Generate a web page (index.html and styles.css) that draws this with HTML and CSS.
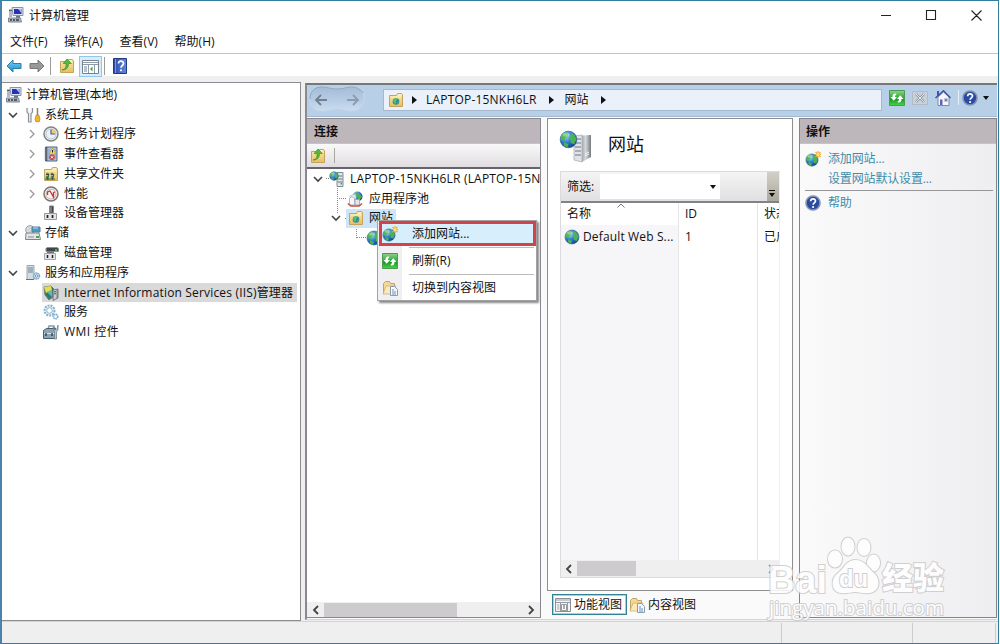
FILE: index.html
```html
<!DOCTYPE html>
<html lang="zh-CN">
<head>
<meta charset="utf-8">
<title>计算机管理</title>
<link rel="stylesheet" href="styles.css">
</head>
<body>
<svg class="defs" width="0" height="0">
  <defs>
    <radialGradient id="gGlobe" cx=".35" cy=".3" r=".75"><stop offset="0" stop-color="#a9dcf7"/><stop offset=".5" stop-color="#2f7fcb"/><stop offset="1" stop-color="#123f8c"/></radialGradient>
    <linearGradient id="gFolder" x2="0" y2="1"><stop offset="0" stop-color="#fbeaae"/><stop offset="1" stop-color="#e5bf61"/></linearGradient>
    <linearGradient id="gServer" x2="1"><stop offset="0" stop-color="#a2a8ac"/><stop offset=".4" stop-color="#d6dade"/><stop offset="1" stop-color="#74797e"/></linearGradient>
    <linearGradient id="gGreen" x2="0" y2="1"><stop offset="0" stop-color="#8fd486"/><stop offset=".6" stop-color="#1d9b2b"/><stop offset="1" stop-color="#49d644"/></linearGradient>
    <linearGradient id="gBlue" x2="0" y2="1"><stop offset="0" stop-color="#7fd0f4"/><stop offset="1" stop-color="#178dcf"/></linearGradient>
    <linearGradient id="gHelp" x2="1"><stop offset="0" stop-color="#2a49a5"/><stop offset="1" stop-color="#6489dc"/></linearGradient>
    <linearGradient id="gNav" x2="0" y2="1"><stop offset="0" stop-color="#a5bcd6"/><stop offset=".5" stop-color="#b5cbe4"/><stop offset="1" stop-color="#cbdcef"/></linearGradient>
  </defs>
  <symbol id="computer" viewBox="0 0 16 16"><path d="M4 .5h11v8H5z" fill="#dce2ef" stroke="#8c93a5"/><path d="M6 2h7.5v5H6z" fill="#2532b8"/><path d="M10 2h3.5v4z" fill="#9cb8f5"/><path d="M1 2h3v8H1z" fill="#aeb7c6"/><path d="M1 3.5h3" stroke="#566" /><path d="M8 9h4v2H8z" fill="#707784"/><path d="M.5 11h12l1 4H.5z" fill="#b3bac6" stroke="#7c8493"/><path d="M2 13h2m1 0h2m1 0h3" stroke="#343c4d" stroke-width="1.5"/></symbol>
  <symbol id="tools" viewBox="0 0 16 16"><path d="M2 1v4l1.500 2v8h2.500V7L7.500 5V1" fill="#eef0f1" stroke="#8d9299" stroke-width="1.200"/><path d="M4.700 0v4" stroke="#fff" stroke-width="2"/><path d="M12.500 1v8" stroke="#8a8174" stroke-width="1.500"/><path d="M11.200 8h2.600l1.200 4-.8 2.700h-3.400L10 12z" fill="#efb72c" stroke="#b77e19" stroke-width=".7"/></symbol>
  <symbol id="clock" viewBox="0 0 16 16"><circle cx="8" cy="8" r="7" fill="#edf1f6" stroke="#838485" stroke-width="1.500"/><path d="M8 2.500A5.500 5.500 0 0 1 13.500 8H8z" fill="#f7cd6b"/><circle cx="8" cy="8" r="5" fill="none" stroke="#bbc8d8"/><path d="M8 3.500V8h4" fill="none" stroke="#436291" stroke-width="1.200"/></symbol>
  <symbol id="event" viewBox="0 0 16 16"><path d="M2.500 1h11.500v14H2.500z" fill="#a9c3e4" stroke="#566779"/><path d="M5 4h8M5 6h8M5 8h8M5 10h8M5 12h8" stroke="#7b98c1" stroke-width=".7"/><path d="M3.500 1v14" stroke="#435468" stroke-width="1.500"/><path d="M1.500 3h3m-3 2h3m-3 2h3m-3 2h3m-3 2h3m-3 2h3" stroke="#858b90" stroke-width=".8"/><path d="M9.500 2l3.600 6H6z" fill="#fadf52" stroke="#c19925" stroke-width=".6"/><path d="M9.500 4v2.500" stroke="#222"/><circle cx="9" cy="11.300" r="2.800" fill="#db3d43"/><path d="M7.900 10.200l2.200 2.200m0-2.200l-2.200 2.200" stroke="#fff"/></symbol>
  <symbol id="folder" viewBox="0 0 16 16"><path d="M1.500 3.500h7l1-2h4l1 1.500v11.500h-13z" fill="url(#gFolder)" stroke="#c7a35a"/><path d="M10 3h3" stroke="#fffbe1"/><path d="M2.500 5h10.800" stroke="#fff0b6"/></symbol>
  <symbol id="share" viewBox="0 0 16 16"><use href="#folder"/><g fill="#4b946e"><circle cx="4.500" cy="8" r="1.500"/><circle cx="9" cy="8" r="1.500"/><path d="M2 14l1-4h3l-.5 4zM7 14l1-4h3l-1 4z"/></g><path d="M3 8.500h3l-2 4.500h3m1-4.500h3L9 13h3" fill="none" stroke="#263f39" stroke-width=".8"/></symbol>
  <symbol id="perf" viewBox="0 0 16 16"><circle cx="8" cy="8" r="7" fill="#f5f4f4" stroke="#7b7472" stroke-width="1.500"/><circle cx="8" cy="8" r="5" fill="none" stroke="#c4b1af"/><path d="M4.500 9V6L7 5l3.500 6V6.500L12 6" fill="none" stroke="#c73434" stroke-width="1.300"/></symbol>
  <symbol id="device" viewBox="0 0 16 16"><path d="M6.500 1h4v7h-4z" fill="#3c4043" stroke="#85898b"/><path d="M8 2v5" stroke="#b4b8ba"/><path d="M1.500 8.500h12v6h-12z" fill="#e5e5e8" stroke="#9999a0"/><path d="M4.500 10v3m5-3v3" stroke="#222" stroke-width="1.700"/></symbol>
  <symbol id="storage" viewBox="0 0 16 16"><circle cx="5" cy="5" r="4.300" fill="#dce0df" stroke="#999"/><circle cx="5" cy="5" r="1.300" fill="#fff" stroke="#aaa" stroke-width=".6"/><path d="M7 2h8v5H7z" fill="#409fd1" stroke="#667a86"/><path d="M8 3h5" stroke="#afe6fb"/><path d="M1 8h13l1.500 6.500H.5z" fill="#e2e4e5" stroke="#7e8589"/><path d="M3 12h6" stroke="#889"/><path d="M11 11h3v2h-3z" fill="#46a843"/></symbol>
  <symbol id="disk" viewBox="0 0 16 16"><path d="M3 3.500l1-1h10l1.500 1v3H3z" fill="#3f4549" stroke="#8f9397"/><path d="M12 5h2" stroke="#46db49" stroke-width="1.500"/><path d="M4 6.500h7v3H4z" fill="#70757a"/><path d="M1.500 8.500h11v6h-11z" fill="#e7e7ea" stroke="#a3a3a9"/><path d="M4.500 10v3m5-3v3" stroke="#222" stroke-width="1.500"/></symbol>
  <symbol id="services" viewBox="0 0 16 16"><path d="M2 .5h7v14H2z" fill="#d2dce5" stroke="#9aa6b0"/><path d="M3 3h5M3 5h5M3 7h5" stroke="#708291"/><path d="M1 14.500h8" stroke="#67737c"/><circle cx="11.500" cy="11" r="3" fill="#d2e6f5" stroke="#7aa5c4" stroke-width="1.500" stroke-dasharray="1.500 .6"/><circle cx="11.500" cy="11" r="1.200" fill="#fff" stroke="#7496af"/></symbol>
  <symbol id="gears" viewBox="0 0 16 16"><circle cx="6.500" cy="6.500" r="5" fill="#e5f2f9" stroke="#86b2cf" stroke-width="2" stroke-dasharray="2 1"/><circle cx="6.500" cy="6.500" r="2.800" fill="#fff" stroke="#8bb1cb"/><circle cx="12.500" cy="12.500" r="2.300" fill="#e8f5fc" stroke="#78a6c7" stroke-width="1.400" stroke-dasharray="1.400 .6"/></symbol>
  <symbol id="wmi" viewBox="0 0 16 16"><path d="M5 5l1-3h5l1 3" fill="none" stroke="#8a98a3" stroke-width="1.500"/><path d="M.5 6.500l3-2h9v10H.5z" fill="#8fa3b3" stroke="#455e70"/><path d="M1 9.500h11" stroke="#dce6ed"/><path d="M3 9v3m6-3v3" stroke="#273b49" stroke-width="1.300"/><path d="M10 3l2 3 2-1 1-4v5l-1.500 2v7h-2V8z" fill="#b9c8d5" stroke="#62798a" stroke-width=".7"/></symbol>
  <symbol id="globe" viewBox="0 0 16 16"><circle cx="8" cy="8" r="7" fill="url(#gGlobe)" stroke="#36658b" stroke-width=".6"/><path d="M2 4l3-2 3 1-1 3-2 1v2L3 8 1.400 9zM10 2c3 1 4.500 4 4.600 6l-1.800 4-3-1V8L8 7l2-2zM4 10l4 2-1 3-3-2z" fill="#4eb94e" opacity=".92"/><ellipse cx="6" cy="4" rx="3" ry="1.600" fill="#fff" opacity=".35"/></symbol>
  <symbol id="addglobe" viewBox="0 0 16 16"><svg x="0" y="2" width="14" height="14"><use href="#globe" width="14" height="14"/></svg><path d="M13 0v7M9.500 3.500h7M10.500 1l5 5m0-5l-5 5" stroke="#eda72e" stroke-width="1.100"/><circle cx="13" cy="3.500" r="1.600" fill="#ffe47a"/></symbol>
  <symbol id="iis" viewBox="0 0 16 16"><path d="M1 2l7-1 3 3-1 8-4 3-4-5z" fill="#337b69" stroke="#6a8582"/><path d="M1 2l7-1 1 4-6 3z" fill="#e7db53"/><path d="M4 7l5-2v7z" fill="#59b9c3"/><path d="M10 5l5-1v9l-5 2.500z" fill="url(#gServer)" stroke="#747d82"/><path d="M11 7l2-.5m-2 2.500l2-.5" stroke="#555"/></symbol>
  <symbol id="serverglobe" viewBox="0 0 16 16"><path d="M8 1.500h6v14H8z" fill="#e1e6ea" stroke="#7c8e94"/><path d="M8.500 5h5m-5 3h5m-5 3h5" stroke="#628071"/><path d="M11.500 12h1.500v1.500h-1.500z" fill="#3bb041"/><svg x="0" y="0" width="10" height="10"><use href="#globe" width="10" height="10"/></svg></symbol>
  <symbol id="pool" viewBox="0 0 16 16"><circle cx="10.500" cy="5.500" r="5" fill="url(#gGlobe)"/><path d="M8 1.500l4 .5 3 4-3 3-2-3z" fill="#4eaf50"/><path d="M3 5l4-2 2 2v3H3z" fill="#e3e9ef" stroke="#a3abb5" stroke-width=".6"/><path d="M2.500 7.500l2.500-2 2.500 2v6.500h-5z" fill="#f6f7f8" stroke="#a5abb3" stroke-width=".8"/><path d="M8 8.500h4.500V14H8z" fill="#e3e7ea" stroke="#a0a7b0" stroke-width=".8"/><path d="M.8 12.500l3.200 2.500h8l3-2.500" fill="none" stroke="#c74b45" stroke-width="1.500"/></symbol>
  <symbol id="sites" viewBox="0 0 16 16"><use href="#folder"/><circle cx="8" cy="9.500" r="3.300" fill="#2e83aa"/><path d="M5 8l3-2 2 1-2 2v3l-2-1zM10 9l1 1-2 2z" fill="#58c55b"/></symbol>
  <symbol id="up" viewBox="0 0 16 16"><use href="#folder"/><path d="M3 12c4-1 4-3 4-6.500H4L8 1l4.500 4.500H9.500c0 4-2 6.500-6.500 6.500z" fill="#53bb36" stroke="#338525" stroke-width=".6"/></symbol>
  <symbol id="refresh" viewBox="0 0 16 16"><path d="M.5 .5h15v15H.5z" fill="url(#gGreen)" stroke="#4d9b50"/><path d="M7.200 3.500C4 3 3.500 5 3.500 7H1.500l3.200 3.700L8 7H6c0-1.300.2-2 1.200-2zM8.800 12.500c3.200.5 3.700-1.500 3.700-3.500h2L11.300 5.300 8 9h2c0 1.300-.2 2-1.200 2z" fill="#fff"/></symbol>
  <symbol id="content" viewBox="0 0 16 16"><path d="M1.500 3.500l2-2h4l1 2h4v10h-11z" fill="#f2d999" stroke="#c2a366"/><path d="M4 6h10l-3 8H1z" fill="#fae9b9" stroke="#c9ab69" stroke-width=".7"/><path d="M8.500 6.500h4l3 3v6h-7z" fill="#f4f8fc" stroke="#8b9cae"/><path d="M10 10h2m-2 2h4m-4 2h4" stroke="#4879af" stroke-width=".8"/></symbol>
  <symbol id="feature" viewBox="0 0 16 16"><path d="M.5 1.500h15v13H.5z" fill="#f5f5f7" stroke="#8b9096"/><path d="M1 3h14M1 5.500h14M5.500 5v9M12.500 5v9" stroke="#959ba4"/><path d="M2 7h2.500v6H2z" fill="#cbd0d7"/><path d="M6.500 7.500h5v6h-5z" fill="#fff" stroke="#999"/><path d="M8 9h2m-2 2h2" stroke="#4e5b73"/></symbol>
  <symbol id="help" viewBox="0 0 16 16"><circle cx="8" cy="8" r="7" fill="#2b4ba2" stroke="#8392b1" stroke-width="1.600"/><path d="M5.700 6.200c0-3 4.800-2.900 4.800-.2 0 2-2.400 1.800-2.400 3.800" fill="none" stroke="#fff" stroke-width="1.700"/><circle cx="8.100" cy="12" r="1.100" fill="#fff"/></symbol>
  <symbol id="down" viewBox="0 0 10 10"><path d="M1 3l4 4 4-4" fill="none" stroke="#444" stroke-width="1.600"/></symbol>
  <symbol id="right" viewBox="0 0 10 10"><path d="M3 1l4 4-4 4" fill="none" stroke="#999" stroke-width="1.300"/></symbol>
</svg>

<main class="window">
  <header class="titlebar"><svg class="ic"><use href="#computer"/></svg><span class="title">计算机管理</span>
    <svg class="controls" viewBox="0 0 104 14"><path d="M1 7.500h10M46.500 2.500h9v9h-9zM91.500 2.500l10 10m0-10l-10 10" fill="none" stroke="#222" stroke-width="1.100"/></svg>
  </header>
  <nav class="menubar"><span>文件(F)</span><span>操作(A)</span><span>查看(V)</span><span>帮助(H)</span></nav>
  <div class="toolbar">
    <svg class="arrow" viewBox="0 0 16 14"><path d="M1 7l6-6v3.500h8v5H7V13z" fill="url(#gBlue)" stroke="#2f7da9"/></svg>
    <svg class="arrow fwd" viewBox="0 0 16 14"><path d="M15 7L9 1v3.500H1v5h8V13z" fill="#999" stroke="#777"/></svg>
    <i class="sep"></i><svg class="ic up"><use href="#up"/></svg>
    <span class="pressed"><svg viewBox="0 0 17 14"><path d="M.5.500h16v13H.5z" fill="#fff" stroke="#77828f"/><path d="M1 2.500h15M1 4.500h15M6.500 5v8M12.500 5v8" stroke="#8f9ba8"/><path d="M2 7h3M2 9h3M2 11h3" stroke="#6f87a8"/><path d="M10.500 6.500v5L8 9z" fill="#38a634"/></svg></span>
    <i class="sep"></i>
    <svg class="book" viewBox="0 0 14 16"><path d="M.5.500h13v15H.5z" fill="url(#gHelp)" stroke="#213a80"/><path d="M2.500 1v14" stroke="#7d96de"/><path d="M5.500 5.500c0-3.500 5-3 5 0 0 2-2.500 2-2.500 4.300" fill="none" stroke="#fff" stroke-width="1.700"/><circle cx="8" cy="12.300" r="1.100" fill="#fff"/></svg>
  </div>

  <div class="body">
    <aside class="tree">
      <div class="row l0"><svg class="ic"><use href="#computer"/></svg><span>计算机管理(本地)</span></div>
      <div class="row l1"><svg class="tw"><use href="#down"/></svg><svg class="ic"><use href="#tools"/></svg><span>系统工具</span></div>
      <div class="row l2"><svg class="tw"><use href="#right"/></svg><svg class="ic"><use href="#clock"/></svg><span>任务计划程序</span></div>
      <div class="row l2"><svg class="tw"><use href="#right"/></svg><svg class="ic"><use href="#event"/></svg><span>事件查看器</span></div>
      <div class="row l2"><svg class="tw"><use href="#right"/></svg><svg class="ic"><use href="#share"/></svg><span>共享文件夹</span></div>
      <div class="row l2"><svg class="tw"><use href="#right"/></svg><svg class="ic"><use href="#perf"/></svg><span>性能</span></div>
      <div class="row l2"><i class="tw"></i><svg class="ic"><use href="#device"/></svg><span>设备管理器</span></div>
      <div class="row l1"><svg class="tw"><use href="#down"/></svg><svg class="ic"><use href="#storage"/></svg><span>存储</span></div>
      <div class="row l2"><i class="tw"></i><svg class="ic"><use href="#disk"/></svg><span>磁盘管理</span></div>
      <div class="row l1"><svg class="tw"><use href="#down"/></svg><svg class="ic"><use href="#services"/></svg><span>服务和应用程序</span></div>
      <div class="row l2"><i class="tw"></i><div class="selected"><svg class="ic"><use href="#iis"/></svg><span class="iis">Internet Information Services (IIS)管理器</span></div></div>
      <div class="row l2"><i class="tw"></i><svg class="ic"><use href="#gears"/></svg><span>服务</span></div>
      <div class="row l2"><i class="tw"></i><svg class="ic"><use href="#wmi"/></svg><span class="wmi">WMI 控件</span></div>
    </aside>

    <section class="console">
      <div class="addressbar">
        <svg class="navbtns" viewBox="0 0 56 27"><path d="M13 1C5 1 1 6 1 13s4 12 12 12c6 0 8-2 15-2s9 2 15 2c7 0 12-5 12-12S50 1 43 1c-6 0-8 2-15 2S19 1 13 1z" fill="url(#gNav)" stroke="#c5d7eb"/><path d="M1 13C1 6 5 1 13 1c6 0 8 2 15 2s9-2 15-2c5 0 9 3 11 6" fill="none" stroke="#8ba2bb"/><path d="M18 14H7m5-5l-5 5 5 5" fill="none" stroke="#71808f" stroke-width="1.800"/><path d="M38 14h11m-5-5l5 5-5 5" fill="none" stroke="#8b9cae" stroke-width="1.800"/></svg>
        <div class="address"><svg class="ic"><use href="#sites"/></svg><i class="tri"></i><span class="host">LAPTOP-15NKH6LR</span><i class="tri"></i><span>网站</span><i class="tri"></i></div>
        <div class="addrtools">
          <svg class="ic"><use href="#refresh"/></svg>
          <svg class="ic" viewBox="0 0 16 16"><path d="M.5 1.500h15v13H.5z" fill="#c8d0da" stroke="#b1bbc8"/><path d="M4 4l8 8m0-8l-8 8" stroke="#8c96a2" stroke-width="2.400"/><path d="M4 4l8 8m0-8l-8 8" stroke="#e7ebef" stroke-width="1"/></svg>
          <svg class="ic" viewBox="0 0 16 16"><path d="M2 1h2v5H2z" fill="#4456ac"/><path d="M3 7v8.500h11V7L8.500 2z" fill="#f5f5fa" stroke="#8388a0"/><path d="M.5 8L8.500.800 15.500 8" fill="none" stroke="#3e51ad" stroke-width="1.500"/><path d="M5 9.500h2.500V15H5z" fill="#5668b6"/><path d="M9.500 8.500h3v3h-3z" fill="#7284c0"/></svg>
          <i class="lightsep"></i><svg class="ic"><use href="#help"/></svg><i class="dropdown"></i>
        </div>
      </div>
      <div class="panes">
        <section class="connections">
          <h2>连接</h2>
          <div class="contool"><svg class="ic"><use href="#up"/></svg><i></i></div>
          <div class="contree">
            <svg class="lines" viewBox="0 0 80 75"><path d="M19 9.500h4M30.500 19v25M32 29.500h8M38 49.500h4M49.500 58v11M50 68.500h10" fill="none" stroke="#888" stroke-dasharray="1 1"/></svg>
            <div class="crow c0"><svg class="tw"><use href="#down"/></svg><svg class="ic"><use href="#serverglobe"/></svg><span class="host">LAPTOP-15NKH6LR (LAPTOP-15N</span></div>
            <div class="crow c1"><i class="tw"></i><svg class="ic"><use href="#pool"/></svg><span>应用程序池</span></div>
            <div class="crow c1"><svg class="tw"><use href="#down"/></svg><div class="picked"><svg class="ic"><use href="#sites"/></svg><span>网站</span></div></div>
            <div class="crow c2"><svg class="ic"><use href="#globe"/></svg></div>
          </div>
          <div class="hscroll"><svg viewBox="0 0 10 10"><path d="M7 1L3 5l4 4" fill="none" stroke="#444" stroke-width="1.800"/></svg><i class="thumb"></i><svg viewBox="0 0 10 10"><path d="M3 1l4 4-4 4" fill="none" stroke="#444" stroke-width="1.800"/></svg></div>
        </section>

        <section class="center">
          <div class="sheet">
            <div class="heading"><svg class="bigicon" viewBox="0 0 34 34"><path d="M15 6l8-1v27l-8-2z" fill="#dfe3e7" stroke="#a1a7ac" stroke-width=".7"/><path d="M23 5.500l9-.5v22l-9 5z" fill="url(#gServer)"/><path d="M16 9h6m-6 4h6m-6 4h6m-6 4h6m-6 4h6" stroke="#6c7680"/><path d="M26 26l4-2m-4 0l4-2" stroke="#f3f3f3"/><svg x="0" y="0" width="19" height="19" viewBox="0 0 16 16"><use href="#globe"/></svg></svg><h1>网站</h1></div>
            <div class="grid">
              <div class="filter"><span>筛选:</span><div class="combo"><i class="dropdown"></i></div><i class="overflow"><i class="dropdown"></i></i></div>
              <div class="columns">
                <div class="col name"><svg class="sort" viewBox="0 0 8 5"><path d="M.5 4.500L4 1l3.500 3.500" fill="none" stroke="#777"/></svg><div class="th">名称</div><div class="td"><svg class="ic"><use href="#globe"/></svg><span class="defaultsite">Default Web S...</span></div></div>
                <div class="col id"><div class="th">ID</div><div class="td">1</div></div>
                <div class="col state"><div class="th">状态</div><div class="td">已启动</div></div>
              </div>
              <div class="hscroll gridscroll"><svg viewBox="0 0 10 10"><path d="M7 1L3 5l4 4" fill="none" stroke="#444" stroke-width="1.800"/></svg><i class="thumb"></i><svg viewBox="0 0 10 10"><path d="M3 1l4 4-4 4" fill="none" stroke="#777" stroke-width="1.500"/></svg></div>
            </div>
          </div>
          <div class="tabs"><div class="tab active"><svg class="ic"><use href="#feature"/></svg><span>功能视图</span></div><div class="tab"><svg class="ic"><use href="#content"/></svg><span>内容视图</span></div></div>
        </section>

        <section class="actions">
          <h2>操作</h2>
          <div class="action"><svg class="ic"><use href="#addglobe"/></svg><a>添加网站...</a></div>
          <div class="action"><i class="ic"></i><a>设置网站默认设置...</a></div>
          <hr>
          <div class="action helprow"><svg class="ic"><use href="#help"/></svg><a>帮助</a></div>
        </section>
      </div>
    </section>
  </div>
  <footer class="status"><i class="s1"></i><i class="s2"></i></footer>
</main>

<div class="context">
  <div class="item hot"><svg class="ic"><use href="#addglobe"/></svg><span>添加网站...</span></div>
  <i class="rule"></i>
  <div class="item"><svg class="ic"><use href="#refresh"/></svg><span>刷新(R)</span></div>
  <i class="rule"></i>
  <div class="item last"><svg class="ic"><use href="#content"/></svg><span>切换到内容视图</span></div>
</div>

<svg class="watermark" viewBox="0 0 186 90">
  <g fill="#fff" stroke="#c9c8ca" stroke-width="2" paint-order="stroke">
    <text x="3" y="58" class="wm-bai" textLength="59" lengthAdjust="spacingAndGlyphs">Bai</text>
    <ellipse cx="70" cy="24" rx="7" ry="8.500"/><ellipse cx="83" cy="11.500" rx="6.500" ry="9"/><ellipse cx="99" cy="12.500" rx="6.500" ry="8.500"/><ellipse cx="108.500" cy="28" rx="6.500" ry="8.500"/>
    <path d="M90 25c-9 0-11 9-17 13-8 6-7 19 3 20 6 1 9-1 14-1s9 2 15 1c10-2 11-13 4-20-6-5-9-13-19-13z"/>
    <text x="74" y="52" class="wm-du" textLength="29" lengthAdjust="spacingAndGlyphs">du</text>
    <text x="117" y="54" class="wm-cn" textLength="62" lengthAdjust="spacingAndGlyphs">经验</text>
    <text x="4" y="80" class="wm-url" textLength="175" lengthAdjust="spacingAndGlyphs">jingyan.baidu.com</text>
  </g>
</svg>
</body>
</html>
```
FILE: styles.css
```css
* { box-sizing: border-box; }
body { margin: 0; width: 1000px; height: 644px; overflow: hidden; color: #111; font: 12px/16px "Open Sans", "Noto Sans CJK SC", sans-serif; }
h1, h2 { margin: 0; font-weight: 400; }
i { display: block; }
svg { display: block; flex: none; }
.defs { position: absolute; }
.ic { width: 16px; height: 16px; flex: none; }
.tw { width: 10px; height: 10px; flex: none; }
.window { width: 999px; height: 644px; border: 1px solid #317f9d; border-left: 2px solid #4a82ae; display: flex; flex-direction: column; background: #f0eff0; }
.titlebar { height: 29px; background: #fff; display: flex; align-items: center; padding: 0 14px 0 6px; gap: 5px; }
.titlebar .ic { margin-top: -2px; }
.title { flex: 1; }
.controls { width: 104px; height: 14px; margin-top: -1px; }
.menubar { height: 24px; background: #fff; border-bottom: 1px solid #c5c3c5; display: flex; gap: 16.500px; padding: 4px 8px 0; }
.menubar span { white-space: nowrap; letter-spacing: .05px; }
.toolbar { height: 22px; background: #fff; display: flex; align-items: center; padding-left: 4px; padding-top: 2px; }
.arrow { width: 16px; height: 14px; }
.fwd { margin-left: 7px; }
.sep { width: 1px; height: 18px; background: #9b9b9b; margin-left: 5px; }
.toolbar .up { margin-left: 8px; }
.pressed { width: 23px; height: 21px; margin-left: 4px; border: 1px solid #90c8ed; background: #d8ecf9; padding: 3px 2px; }
.pressed svg { width: 17px; height: 14px; }
.toolbar .pressed + .sep { margin-left: 2px; }
.book { width: 14px; height: 16px; margin-left: 8px; }
.body { height: 545px; padding-top: 6px; display: flex; }
.tree { width: 299px; height: 539px; background: #fff; border: 1px solid #8c8b90; border-left: 0; padding-top: 2px; }
.row { height: 19.750px; display: flex; align-items: center; white-space: nowrap; }
.row .ic { margin-right: 4px; }
.l0 { padding-left: 4px; }
.l1 { padding-left: 6px; }
.l1 .tw { margin-right: 7px; }
.l2 { padding-left: 25px; }
.l2 .tw { margin-right: 5px; }
.row.l2 > .ic { margin-left: 1px; margin-right: 5px; }
.selected { display: flex; align-items: center; height: 19px; width: 255px; background: #d9d9d9; padding-left: 1px; margin-top: 1px; }
.selected .ic { margin-right: 5px; }
.iis { letter-spacing: .17px; }
.wmi { letter-spacing: .5px; }
.host { letter-spacing: .2px; }
.console { margin-left: 4px; width: 692px; height: 537px; border: 1px solid #8b8b8f; border-top: 2px solid #77777b; border-left: 2px solid #8b8a8f; border-right: 0; border-bottom-color: #d6d4d6; background: #fafafb; margin-top: 1px; }
.addressbar { height: 32px; background: #b8cfe8; border-bottom: 1px solid #a5bad2; display: flex; }
.navbtns { width: 56px; height: 27px; margin-left: 2px; margin-top: 1px; }
.address { width: 499px; height: 22px; margin: 4px 0 0 18px; background: #eaf1fb; border: 1px solid #a4b8ce; display: flex; align-items: center; padding-left: 4px; white-space: nowrap; }
.tri { width: 0; height: 0; border-left: 5px solid #111; border-top: 4px solid transparent; border-bottom: 4px solid transparent; margin: 0 11px 0 12px; }
.address .ic + .tri { margin: 0 9px 0 8px; }
.addrtools { display: flex; align-items: center; gap: 7px; height: 23px; margin: 1px 0 0 7px; }
.lightsep { width: 1px; height: 15px; background: #e6eff9; }
.lightsep + .ic { margin-left: -4px; }
.addrtools .dropdown { margin-left: -2px; }
.dropdown { width: 0; height: 0; border-top: 4px solid #111; border-left: 3px solid transparent; border-right: 3px solid transparent; }
.panes { display: flex; padding-top: 1px; height: 502px; margin-left: -1px; }
.connections { width: 235px; height: 500px; border: 1px solid #8b8790; background: #fff; display: flex; flex-direction: column; overflow: hidden; }
h2 { font: 700 12px/24px "Noto Sans CJK SC", sans-serif; height: 25px; background: #bdb7bc; border-bottom: 1px solid #c8c3c7; padding-left: 7px; flex: none; }
.contool { height: 25px; flex: none; background: linear-gradient(#faf9fa, #dfdddf); border-bottom: 2px solid #66636a; display: flex; align-items: center; padding-left: 3px; }
.contool i { width: 1px; height: 15px; background: #aaa79c; margin-left: 8px; }
.contree { position: relative; flex: 1; overflow: hidden; }
.lines { position: absolute; left: 0; top: 0; width: 80px; height: 75px; }
.crow { height: 19.750px; display: flex; align-items: center; white-space: nowrap; position: relative; }
.crow .ic { margin-right: 5px; }
.c0 { padding-left: 6px; }
.c0 .tw { margin-right: 6px; }
.c1 { padding-left: 24px; }
.c1 .tw { margin-right: 6px; }
.crow > i + .ic { margin-right: 6px; }
.picked { display: flex; height: 19px; width: 50px; align-items: center; background: #cde5f8; margin-left: -1px; padding-left: 2px; }
.c2 { padding-left: 59px; }
.hscroll { height: 15px; background: #f0eff0; display: flex; align-items: center; padding: 0 4px; flex: none; }
.hscroll svg { width: 10px; height: 10px; }
.hscroll .thumb { width: 133px; height: 14px; background: #cdcbcd; margin: 0 auto 0 3px; }
.center { margin-left: 6px; width: 246px; display: flex; flex-direction: column; }
.sheet { height: 473px; border: 1px solid #8f8c92; background: #fff; padding: 9px 13px 0 12px; }
.heading { display: flex; height: 43px; padding-top: 1px; }
.bigicon { width: 34px; height: 34px; margin-top: 1px; margin-left: -1px; }
h1 { font: 18px/28px "Noto Sans CJK SC", sans-serif; margin-left: 15px; }
.grid { width: 220px; height: 407px; border: 1px solid #dcdadc; border-right-color: #eee; }
.filter { height: 31px; border-bottom: 2px solid #838087; background: linear-gradient(#f5f4f5, #e0dfe1); display: flex; align-items: center; overflow: hidden; }
.filter > span { width: 39px; padding-left: 6px; white-space: nowrap; }
.combo { width: 120px; height: 25px; background: #fff; display: flex; align-items: center; justify-content: flex-end; padding-right: 4px; }
.overflow { width: 12px; height: 31px; background: linear-gradient(#d3d1c9, #aaa89c); margin-left: auto; padding: 22px 0 0 2px; }
.overflow .dropdown { position: relative; }
.overflow .dropdown::before { content: ""; position: absolute; left: -3px; top: -7px; width: 6px; height: 1px; background: #111; }
.columns { display: flex; height: 357px; overflow: hidden; }
.col { border-right: 1px solid #e8e6e8; flex: none; position: relative; white-space: nowrap; }
.th { height: 22px; padding: 3px 6px 0; background: #fff; }
.td { height: 23px; display: flex; align-items: center; padding: 0 6px; }
.name { width: 118px; background: #f6f5f7; }
.name .td { padding-left: 3px; gap: 3px; }
.defaultsite { letter-spacing: .14px; }
.sort { position: absolute; left: 56px; top: 0; width: 8px; height: 5px; }
.id { width: 79px; }
.state { width: 60px; }
.gridscroll { height: 17px; padding: 0 3px; }
.gridscroll .thumb { width: 59px; height: 15px; }
.tabs { display: flex; padding: 3px 0 0 5px; }
.tab { height: 21px; display: flex; align-items: center; gap: 3px; padding: 0 2px; white-space: nowrap; }
.tab.active { width: 75px; border: 1px solid #328293; outline: 1px solid #a2d2dc; outline-offset: -2px; background: #fff; }
.actions { margin-left: 6px; width: 198px; height: 500px; border: 1px solid #85828a; background: linear-gradient(90deg, #fafafb, #eeedef); overflow: hidden; }
.actions h2 { padding-left: 6px; }
.action { display: flex; height: 20px; align-items: center; gap: 7px; padding-left: 5px; white-space: nowrap; color: #3f8da9; letter-spacing: -.15px; }
.actions h2 + .action { margin-top: 5px; }
.actions hr { margin: 1px 3px 2px 5px; border: 0; border-top: 1px solid #98969b; }
.status { height: 22px; flex: none; border-top: 1px solid #d4d2d4; display: flex; padding-left: 779px; }
.status i { border-left: 1px solid #ccc; height: 20px; width: 131px; margin-top: 1px; }
.status .s2 { width: 84px; border-right: 1px solid #ccc; }
.context { position: absolute; left: 377px; top: 220px; width: 160px; height: 81px; border: 1px solid #a3a1a4; background: linear-gradient(90deg, #f0eff1 24px, #fff 24px); box-shadow: 2px 2px 2px #888; }
.item { display: flex; align-items: center; height: 25px; gap: 14px; padding-left: 4px; white-space: nowrap; }
.hot { height: 25px; margin: 0 0 0 1px; width: 157px; border: 3px solid #d0434a; background: #d7effc; padding-left: 0; gap: 14px; }
.rule { height: 1px; background: #bbb; margin: 1px 2px 0 31px; }
.item.last { height: 26px; }
.watermark { position: absolute; left: 765px; top: 535px; width: 186px; height: 90px; opacity: .85; }
.wm-bai { font: 700 39px "Liberation Sans", sans-serif; }
.wm-du { font: 700 24px "Liberation Sans", sans-serif; }
.wm-cn { font: 900 31px "Noto Sans CJK SC", sans-serif; }
.wm-url { font: 20px "Open Sans", sans-serif; }
```
